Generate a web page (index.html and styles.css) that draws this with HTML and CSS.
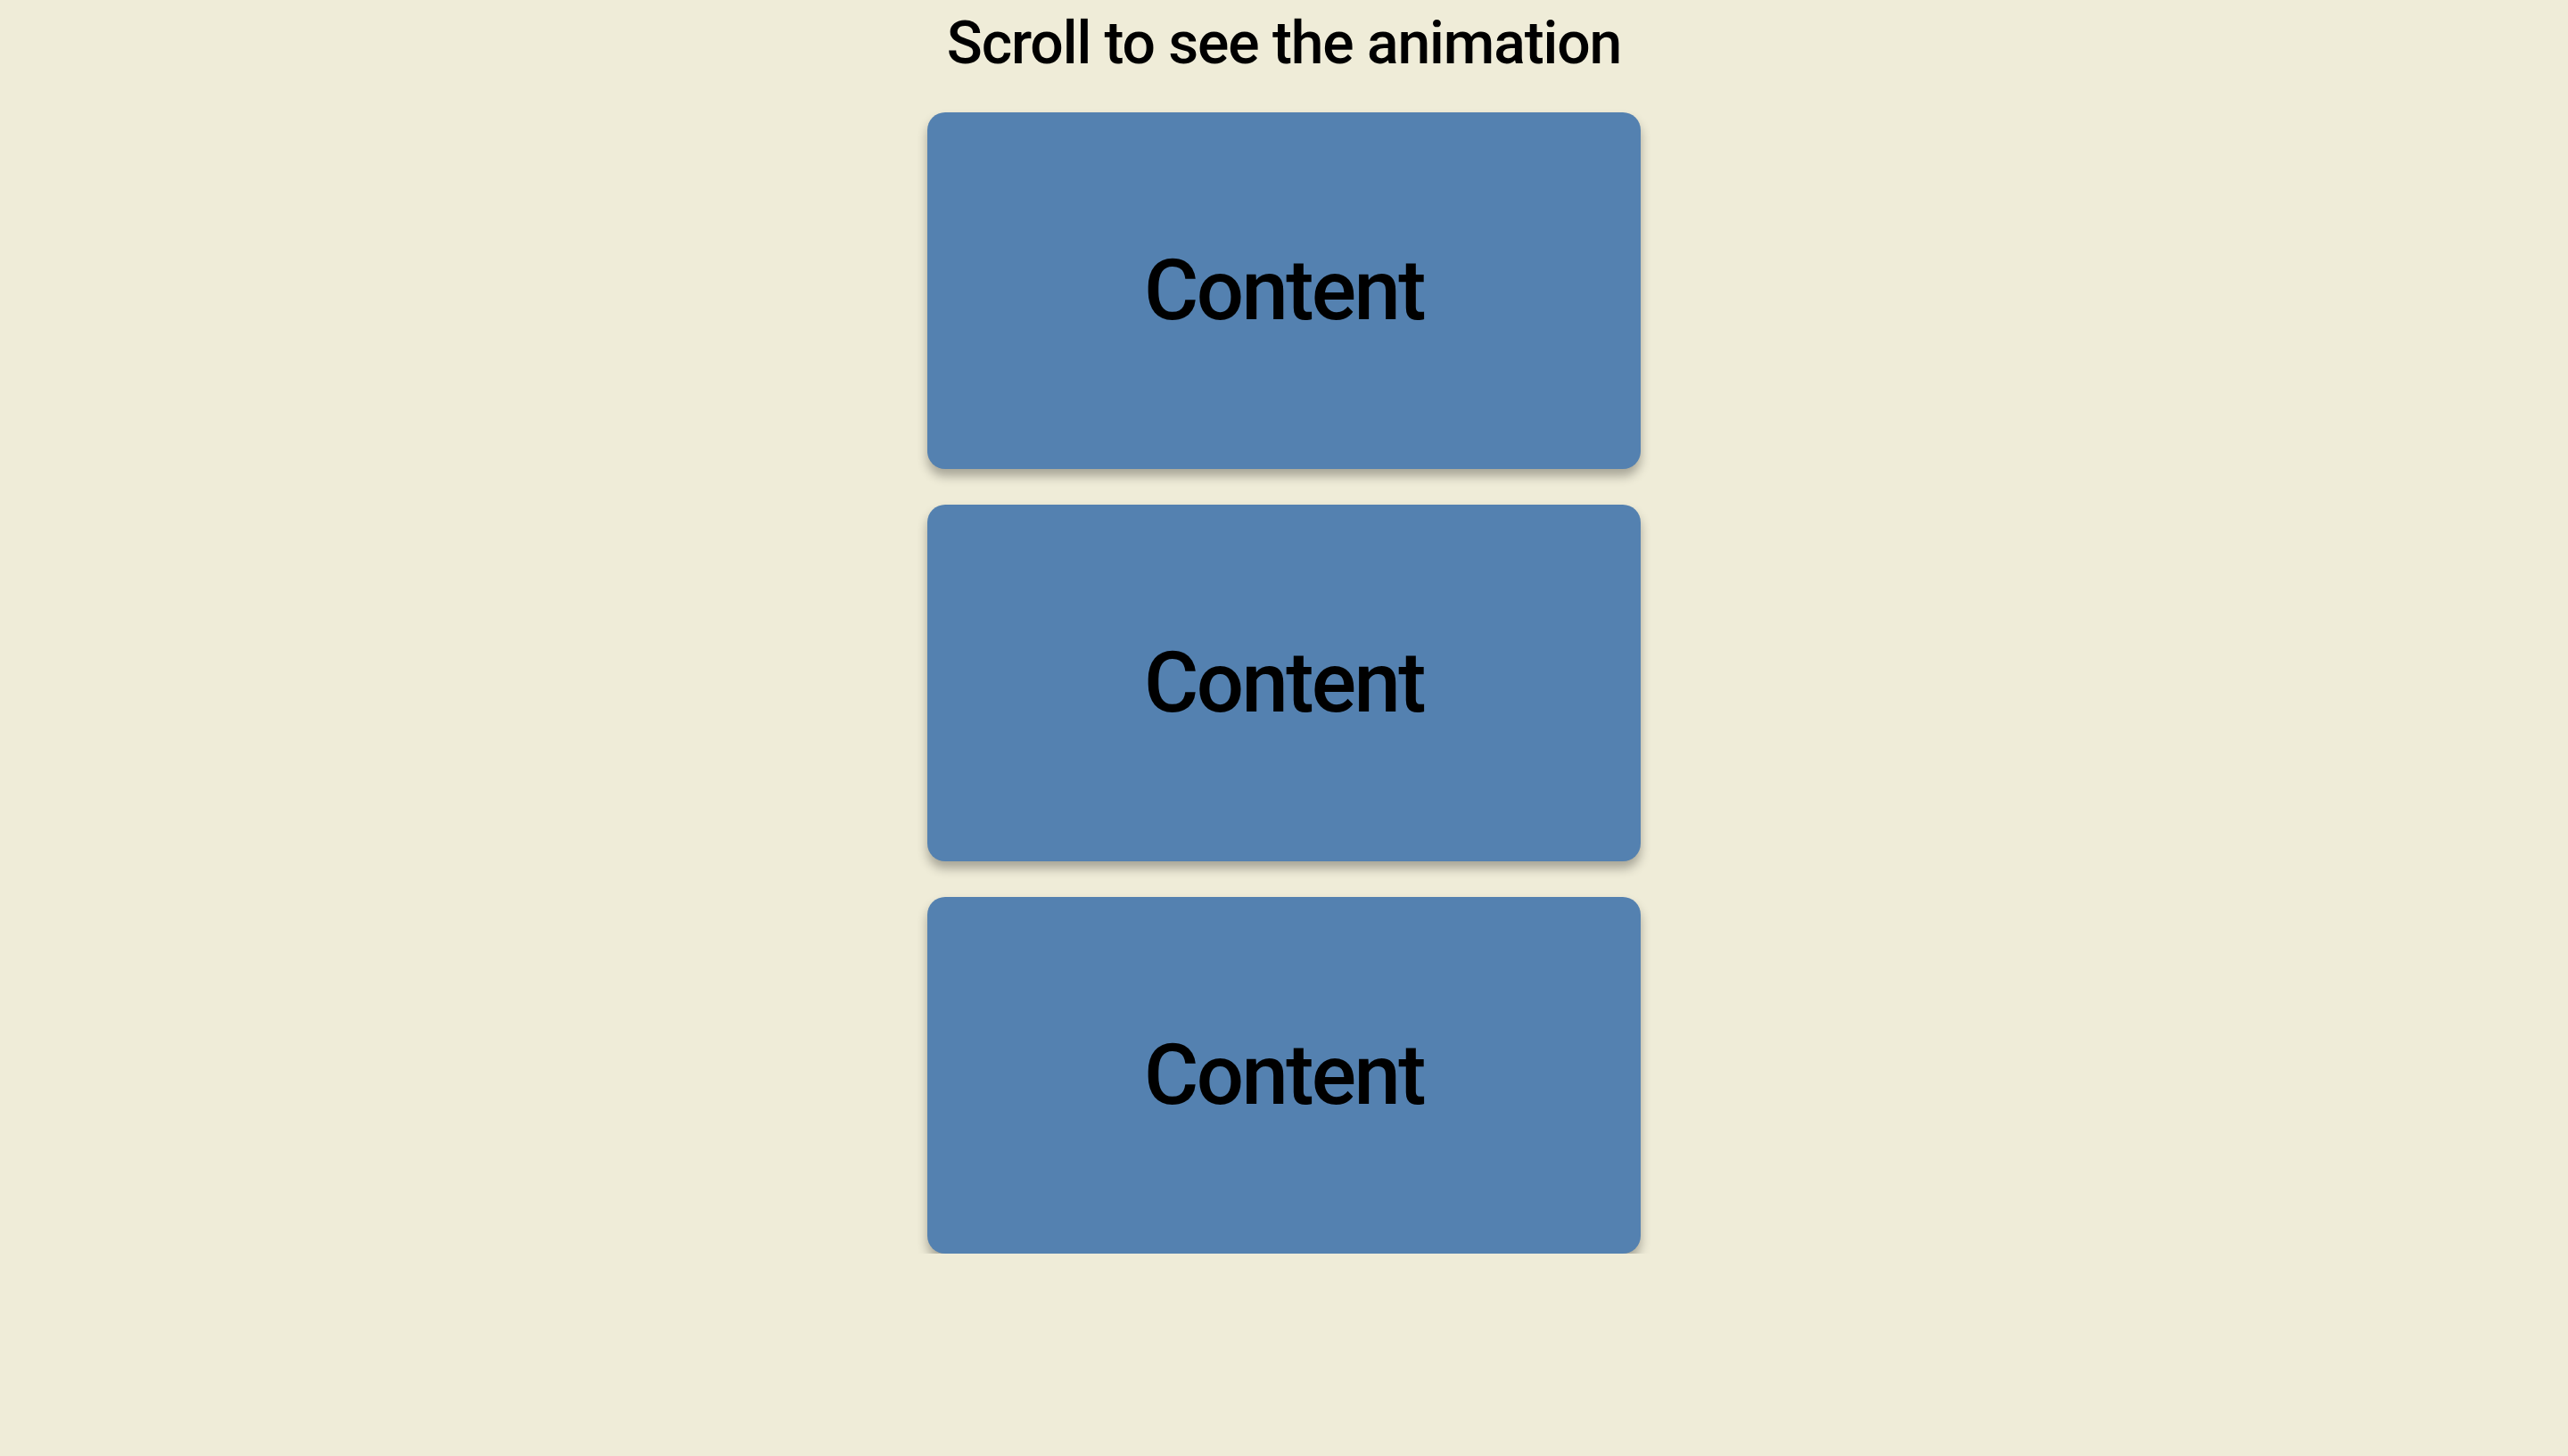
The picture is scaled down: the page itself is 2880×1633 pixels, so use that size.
FILE: index.html
```html
<!DOCTYPE html>
<html>
<head>
<meta charset="utf-8">
<link rel="stylesheet" href="styles.css">
</head>
<body>
<main class="page">
  <h1 class="title">Scroll to see the animation</h1>
  <div class="list">
    <div class="card">Content</div>
    <div class="card">Content</div>
    <div class="card">Content</div>
  </div>
</main>
</body>
</html>
```

FILE: styles.css
```css
html, body {
  margin: 0;
  padding: 0;
  background: #efecd8;
  font-family: Roboto, "Liberation Sans", sans-serif;
  color: #000;
}
.page {
  display: flex;
  flex-direction: column;
  align-items: center;
  padding-top: 10px;
}
.title {
  margin: 0;
  font-size: 66px;
  font-weight: 500;
  line-height: 77px;
  letter-spacing: -1.1px;
}
.list {
  margin-top: 39px;
  display: flex;
  flex-direction: column;
  gap: 40px;
}
.card {
  width: 800px;
  height: 400px;
  border-radius: 20px;
  background: #5481b0;
  box-shadow: 0 8px 12px rgba(0, 0, 0, 0.3);
  display: flex;
  align-items: center;
  justify-content: center;
  font-size: 94px;
  font-weight: 500;
  letter-spacing: -2.6px;
}
```
